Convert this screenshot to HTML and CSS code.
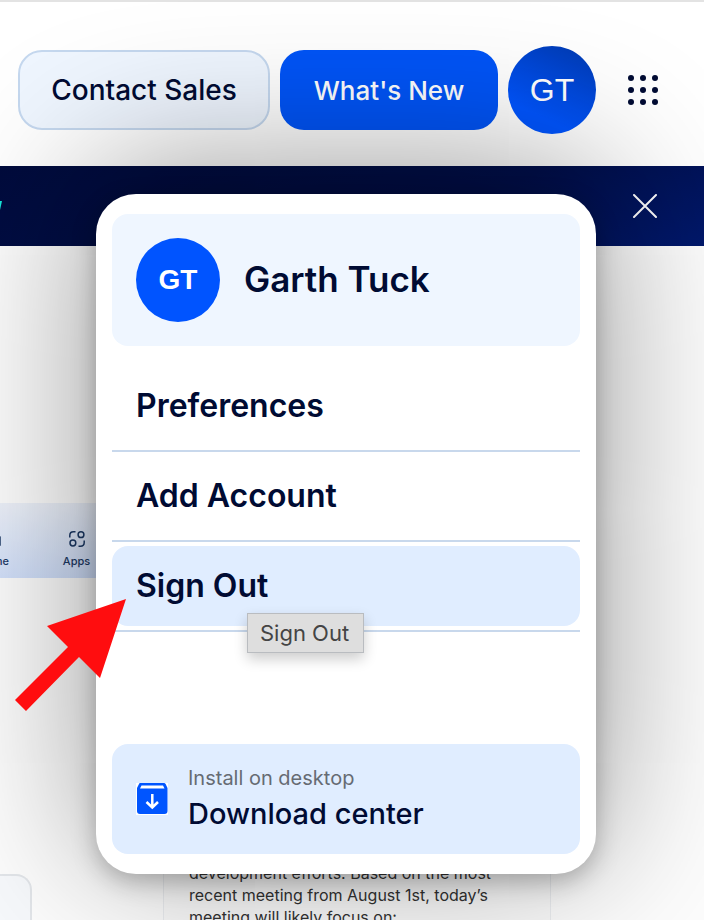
FILE: index.html
```html
<!DOCTYPE html>
<html lang="en">
<head>
<meta charset="utf-8">
<title>Account menu</title>
<link rel="stylesheet" href="styles.css">
</head>
<body>
<header class="topbar">
  <button class="btn btn-outline" type="button">Contact Sales</button>
  <button class="btn btn-primary" type="button">What's New</button>
  <div class="account">
    <button class="avatar avatar-trigger" type="button">GT</button>
    <section class="menu">
      <div class="profile">
        <span class="avatar avatar-small">GT</span>
        <h2 class="profile-name">Garth Tuck</h2>
      </div>
      <ul class="menu-list">
        <li class="menu-row"><button class="menu-item" type="button">Preferences</button></li>
        <li class="menu-row"><button class="menu-item" type="button">Add Account</button></li>
        <li class="menu-row">
          <button class="menu-item is-hovered" type="button">Sign Out</button>
          <span class="tooltip" role="tooltip">Sign Out</span>
          <svg class="pointer" viewBox="0 0 112 112" aria-hidden="true"><path d="M111 0 32 27 53 48 0 101 11 112 64 58 85 79Z" fill="#ff0d0f"/></svg>
        </li>
      </ul>
      <a class="download" href="#download">
        <svg class="download-icon" viewBox="0 0 32 32" aria-hidden="true">
          <path fill="#fff" d="M0 0h32v32H0z"/>
          <path fill="#0055ff" d="M4 0H28Q29 0 29.600 1L31.500 5V28Q31.500 31 28.500 31H4Q1 31 1 28V5L3 1Q3.400 0 4 0Z"/>
          <path fill="#fff" d="M5.500 2.500H27L28.500 5.500H4Z"/>
          <path d="M16.300 11V24M10.500 19l5.800 5.500L22 19" fill="none" stroke="#fff" stroke-width="2.500"/>
        </svg>
        <span class="download-text">
          <span class="download-hint">Install on desktop</span>
          <span class="download-title">Download center</span>
        </span>
      </a>
    </section>
  </div>
  <button class="apps-button" type="button" aria-label="Apps">
    <svg class="apps-icon" viewBox="0 0 30 30" fill="#000b33" aria-hidden="true">
      <circle cx="3" cy="3" r="3"/><circle cx="15" cy="3" r="3"/><circle cx="27" cy="3" r="3"/>
      <circle cx="3" cy="15" r="3"/><circle cx="15" cy="15" r="3"/><circle cx="27" cy="15" r="3"/>
      <circle cx="3" cy="27" r="3"/><circle cx="15" cy="27" r="3"/><circle cx="27" cy="27" r="3"/>
    </svg>
  </button>
</header>
<div class="banner">
  <svg class="banner-mark" viewBox="0 0 2 10" aria-hidden="true"><path d="M0 0H2L0 9Z" fill="#16e8dc"/></svg>
  <button class="banner-close" type="button" aria-label="Close">
    <svg class="close-icon" viewBox="0 0 24 24" aria-hidden="true"><path d="M1 1 23 23M23 1 1 23" stroke="#fff" stroke-width="2" stroke-linecap="round"/></svg>
  </button>
</div>
<main class="content">
  <nav class="strip">
    <ul class="strip-list">
      <li><a class="strip-item" href="#home">
        <svg class="strip-icon" viewBox="0 0 16 16" aria-hidden="true"><path d="M1 6 8 1l6 5v8H1Z"/></svg>
        <span>Home</span></a></li>
      <li><a class="strip-item" href="#apps">
        <svg class="strip-icon" viewBox="0 0 16 16" aria-hidden="true"><circle cx="12" cy="3.700" r="2.900"/><circle cx="3.900" cy="12" r="2.900"/><path d="M.8 6.500V4.500Q.8.800 4.500.800H6.500M15.200 9.500V11.500Q15.200 15.200 11.500 15.200H9.500"/></svg>
        <span>Apps</span></a></li>
    </ul>
  </nav>
  <div class="cards">
    <div class="card card-side"></div>
    <p class="card card-note">development efforts. Based on the most recent meeting from August 1st, today’s meeting will likely focus on:</p>
  </div>
</main>
</body>
</html>
```
FILE: styles.css
```css
* { box-sizing: border-box; }

body {
  margin: 0;
  height: 100vh;
  display: flex;
  flex-direction: column;
  overflow: hidden;
  background: #fdfdfd;
  color: #000b33;
  font-family: Inter, "Liberation Sans", sans-serif;
}

button {
  border: 0;
  padding: 0;
  background: none;
  color: inherit;
  font: inherit;
}

a { color: inherit; text-decoration: none; }
ul { list-style: none; margin: 0; padding: 0; }
svg { display: block; }

.topbar {
  flex: none;
  display: flex;
  align-items: center;
  justify-content: flex-end;
  gap: 10px;
  height: 166px;
  padding: 12px 46px 0 0;
  border-top: 2px solid #e3e3e3;
  background: #fff;
}

.topbar > * { flex: none; }

.btn {
  height: 80px;
  border-radius: 24px;
  font-size: 28px;
  font-weight: 500;
}

.btn-outline {
  min-width: 252px;
  border: 2px solid #c5d8ef;
  background: #eff6ff;
}

.btn-primary {
  min-width: 218px;
  background: #0054f7;
  color: #fff;
  font-size: 26px;
}

.account { position: relative; }

.avatar {
  display: grid;
  place-items: center;
  flex: none;
  border-radius: 50%;
  background: #0054ff;
  color: #fff;
}

.avatar-trigger {
  width: 88px;
  height: 88px;
  background: linear-gradient(205deg, #0038ac, #0055ff 75%);
  font-family: "Liberation Sans", sans-serif;
  font-size: 32px;
}

.avatar-small {
  width: 84px;
  height: 84px;
  font-family: "Liberation Sans", sans-serif;
  font-size: 28px;
  font-weight: 700;
}

.menu {
  position: absolute;
  z-index: 2;
  top: 148px;
  right: 0;
  width: 500px;
  padding: 20px 16px;
  border-radius: 40px;
  background: #fff;
  box-shadow: 0 -20px 160px rgba(0, 0, 0, 0.45), 0 8px 24px rgba(0, 0, 0, 0.25);
}

.profile {
  display: flex;
  align-items: center;
  gap: 24px;
  margin-bottom: 16px;
  padding: 24px;
  border-radius: 16px;
  background: #eff6ff;
}

.profile-name {
  margin: 0;
  padding-bottom: 2px;
  font-size: 35px;
  font-weight: 600;
}

.menu-row {
  position: relative;
  padding: 4px 0;
  border-bottom: 2px solid #c8d8ec;
}

.menu-item {
  width: 100%;
  height: 80px;
  padding: 0 24px 2px;
  border-radius: 16px;
  font-size: 32px;
  font-weight: 600;
  text-align: left;
}

.is-hovered { background: #e0edff; }

.tooltip {
  position: absolute;
  z-index: 1;
  top: 71px;
  left: 135px;
  padding: 0 14px 0 12px;
  border: 1px solid #b9bcc0;
  background: #dedede;
  color: #444;
  font-size: 22px;
  line-height: 38px;
  white-space: nowrap;
  box-shadow: 0 6px 14px rgba(0, 0, 0, 0.2);
}

.pointer {
  position: absolute;
  top: 57px;
  left: -97px;
  width: 112px;
  height: 112px;
}

.download {
  display: flex;
  align-items: center;
  gap: 20px;
  height: 110px;
  margin-top: 112px;
  padding: 0 24px;
  border-radius: 16px;
  background: #e0edff;
}

.download-icon { width: 32px; height: 32px; }
.download-text { display: grid; }

.download-hint {
  color: #666b73;
  font-size: 20px;
  line-height: 30px;
}

.download-title {
  font-size: 29px;
  font-weight: 500;
  line-height: 42px;
}

.apps-button { margin-left: 22px; }
.apps-icon { width: 30px; height: 30px; }

.banner {
  flex: none;
  display: flex;
  align-items: center;
  justify-content: space-between;
  height: 80px;
  padding-right: 47px;
  background: linear-gradient(160deg, #000b3c, #000f4c 60%, #00186c);
}

.banner-mark { width: 2px; height: 10px; }
.close-icon { width: 24px; height: 24px; }

.content {
  flex: 1;
  min-height: 0;
  padding-top: 257px;
  overflow: hidden;
}

.strip {
  width: 50%;
  height: 75px;
  overflow: hidden;
  background: linear-gradient(175deg, #eef2fa, #cbdcfb 90%);
}

.strip-list {
  display: flex;
  margin-left: -48px;
}

.strip-item {
  display: grid;
  justify-items: center;
  gap: 6px;
  width: 83px;
  padding-top: 28px;
  color: #1d3a66;
  font-size: 11px;
  font-weight: 500;
  line-height: 16px;
}

.strip-icon {
  width: 16px;
  height: 16px;
  fill: none;
  stroke: #1d3a66;
  stroke-width: 1.5;
}

.cards {
  display: flex;
  align-items: flex-start;
  gap: 131px;
  margin-top: 296px;
}

.card {
  flex: none;
  margin: 0;
  height: 120px;
  border: 1px solid #eceef1;
}

.card-side {
  width: 32px;
  border-color: #e3e6ea;
  border-width: 2px 2px 0 0;
  border-radius: 0 16px 0 0;
  background: #f7f9fc;
}

.card-note {
  width: 388px;
  margin-top: -12px;
  padding: 0 40px 0 25px;
  border-width: 0 1px;
  background: #fbfbfb;
  color: #333;
  font-size: 16px;
  line-height: 22px;
}
```
